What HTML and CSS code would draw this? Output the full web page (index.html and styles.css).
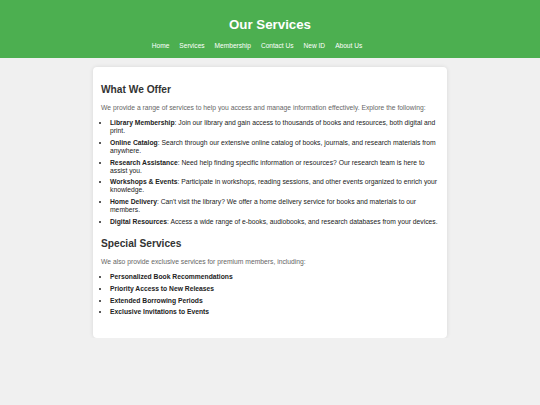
FILE: index.html
```html
<!DOCTYPE html>
<html lang="en">
<head>
<meta charset="utf-8">
<title>Our Services</title>
<link rel="stylesheet" href="styles.css">
</head>
<body>
<header class="site-header">
  <h1 class="site-title">Our Services</h1>
  <nav class="site-nav">
    <a href="#">Home</a>
    <a href="#">Services</a>
    <a href="#">Membership</a>
    <a href="#">Contact Us</a>
    <a href="#">New ID</a>
    <a href="#">About Us</a>
  </nav>
</header>
<main class="card">
  <h2 class="section-title first">What We Offer</h2>
  <p class="intro">We provide a range of services to help you access and manage information effectively. Explore the following:</p>
  <ul class="list">
    <li><strong>Library Membership</strong>: Join our library and gain access to thousands of books and resources, both digital and print.</li>
    <li><strong>Online Catalog</strong>: Search through our extensive online catalog of books, journals, and research materials from anywhere.</li>
    <li><strong>Research Assistance</strong>: Need help finding specific information or resources? Our research team is here to assist you.</li>
    <li><strong>Workshops &amp; Events</strong>: Participate in workshops, reading sessions, and other events organized to enrich your knowledge.</li>
    <li><strong>Home Delivery</strong>: Can't visit the library? We offer a home delivery service for books and materials to our members.</li>
    <li><strong>Digital Resources</strong>: Access a wide range of e-books, audiobooks, and research databases from your devices.</li>
  </ul>
  <h2 class="section-title second">Special Services</h2>
  <p class="intro">We also provide exclusive services for premium members, including:</p>
  <ul class="list last">
    <li><strong>Personalized Book Recommendations</strong></li>
    <li><strong>Priority Access to New Releases</strong></li>
    <li><strong>Extended Borrowing Periods</strong></li>
    <li><strong>Exclusive Invitations to Events</strong></li>
  </ul>
</main>
</body>
</html>
```
FILE: styles.css
```css
html, body {
  margin: 0;
  padding: 0;
}
body {
  background: #f0f0f0;
  font-family: "Liberation Sans", Arial, sans-serif;
  color: #333;
}
.site-header {
  background: #4caf50;
  color: #fff;
  height: 58px;
  box-sizing: border-box;
  padding-top: 17px;
  display: flex;
  flex-direction: column;
  align-items: center;
}
.site-title {
  margin: 0;
  font-size: 13.3px;
  line-height: 16px;
  font-weight: bold;
}
.site-nav {
  margin-top: 8.8px;
  padding-right: 26px;
  display: flex;
  gap: 10px;
  font-size: 6.6px;
  line-height: 8px;
}
.site-nav a {
  color: #fff;
  text-decoration: none;
}
.card {
  display: block;
  box-sizing: border-box;
  width: 354px;
  margin: 9px auto 0;
  padding: 8px;
  background: #fff;
  border-radius: 4px;
  box-shadow: 0 0 4px rgba(0, 0, 0, 0.1);
}
.section-title {
  font-size: 10.2px;
  line-height: 12px;
  font-weight: bold;
  color: #333;
  margin: 0 0 8px;
}
.section-title.first {
  margin-top: 8.6px;
}
.section-title.second {
  margin-top: 12px;
}
.intro {
  margin: 0 0 7.6px;
  font-size: 6.75px;
  line-height: 8px;
  color: #666;
}
.list {
  margin: 0;
  padding-left: 9px;
  font-size: 6.75px;
  line-height: 8px;
  color: #222;
}
.list li {
  margin-bottom: 3.7px;
}
.list li:last-child {
  margin-bottom: 0;
}
.list.last {
  margin-bottom: 13.4px;
}
```
